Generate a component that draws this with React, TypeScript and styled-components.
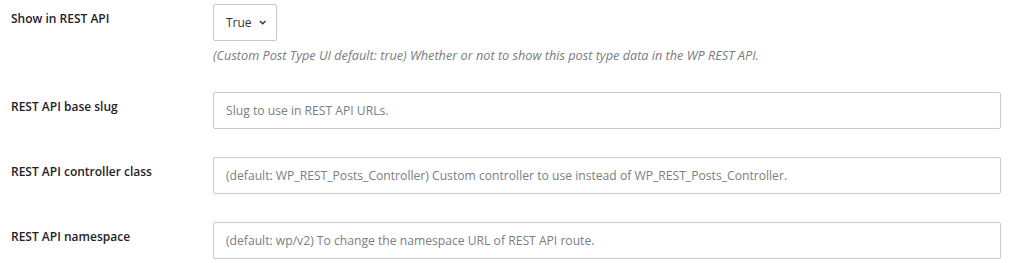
import React from 'react';
import styled, { createGlobalStyle } from 'styled-components';

const GlobalStyle = createGlobalStyle`
  body {
    margin: 0;
    background: #fff;
    font-family: "Open Sans", "Noto Sans", sans-serif;
    color: #1d2327;
  }
`;

const FormTable = styled.div`
  display: grid;
  grid-template-columns: 213px 1fr;
  padding-right: 23px;
  margin-top: -10px;
`;

const Label = styled.div`
  padding: 20px 10px 14px 11px;
  font-size: 12px;
  font-weight: 600;
  line-height: 17px;
  color: #1d2327;
`;

const Field = styled.div`
  padding: 14px 0;
`;

const SelectBox = styled.div`
  display: inline-flex;
  align-items: center;
  gap: 7px;
  box-sizing: border-box;
  height: 37px;
  width: 64px;
  padding: 0 10px 0 12px;
  border: 1px solid #c8c9cc;
  border-radius: 2px;
  font-size: 12px;
  color: #2c3338;
`;

const TextInput = styled.div`
  box-sizing: border-box;
  display: flex;
  align-items: center;
  height: 37px;
  padding: 0 12px;
  border: 1px solid #c8c9cc;
  border-radius: 2px;
  font-size: 12.15px;
  color: #7a7e83;
  white-space: nowrap;
`;

const Description = styled.p`
  margin: 6px 0 0;
  font-size: 12.7px;
  font-style: italic;
  line-height: 17px;
  color: #787c82;
  white-space: nowrap;
`;

const Chevron = () => (
  <svg width="10" height="7" viewBox="0 0 10 7">
    <path d="M1.2 1.5l3.8 3.6 3.8-3.6" fill="none" stroke="#2c3338" strokeWidth="1.9" />
  </svg>
);

const rows = [
  { label: 'REST API base slug', placeholder: 'Slug to use in REST API URLs.' },
  {
    label: 'REST API controller class',
    placeholder:
      '(default: WP_REST_Posts_Controller) Custom controller to use instead of WP_REST_Posts_Controller.',
  },
  {
    label: 'REST API namespace',
    placeholder: '(default: wp/v2) To change the namespace URL of REST API route.',
  },
];

export default function App() {
  return (
    <>
      <GlobalStyle />
      <FormTable>
        <Label>Show in REST API</Label>
        <Field>
          <SelectBox>
            True <Chevron />
          </SelectBox>
          <Description>
            (Custom Post Type UI default: true) Whether or not to show this post type data in the WP REST API.
          </Description>
        </Field>
        {rows.map((row) => (
          <React.Fragment key={row.label}>
            <Label>{row.label}</Label>
            <Field>
              <TextInput>{row.placeholder}</TextInput>
            </Field>
          </React.Fragment>
        ))}
      </FormTable>
    </>
  );
}
